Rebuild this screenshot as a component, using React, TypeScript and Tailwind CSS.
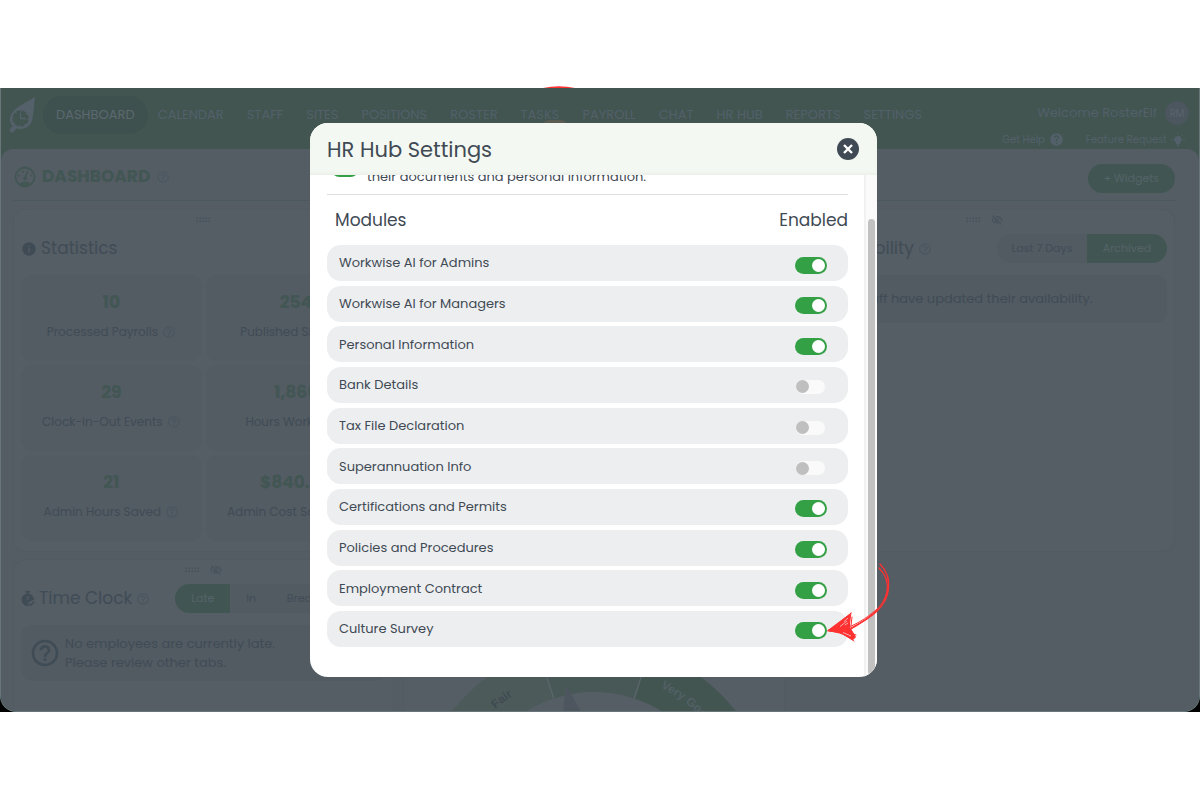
import React from "react";
import { MdHelp, MdHelpOutline, MdInfo, MdOutlineVisibilityOff } from "react-icons/md";

const navItems = [
  "DASHBOARD",
  "CALENDAR",
  "STAFF",
  "SITES",
  "POSITIONS",
  "ROSTER",
  "TASKS",
  "PAYROLL",
  "CHAT",
  "HR HUB",
  "REPORTS",
  "SETTINGS",
];

const stats = [
  { value: "10", label: "Processed Payrolls" },
  { value: "254", label: "Published Shifts" },
  { value: "29", label: "Clock-in-Out Events" },
  { value: "1,866", label: "Hours Worked" },
  { value: "21", label: "Admin Hours Saved" },
  { value: "$840.00", label: "Admin Cost Savings" },
];

const modules = [
  { name: "Workwise AI for Admins", on: true },
  { name: "Workwise AI for Managers", on: true },
  { name: "Personal Information", on: true },
  { name: "Bank Details", on: false },
  { name: "Tax File Declaration", on: false },
  { name: "Superannuation Info", on: false },
  { name: "Certifications and Permits", on: true },
  { name: "Policies and Procedures", on: true },
  { name: "Employment Contract", on: true },
  { name: "Culture Survey", on: true },
];

function Logo() {
  return (
    <svg viewBox="0 0 26 36" className="h-9 w-[26px] shrink-0" aria-hidden="true">
      <path
        d="M26 0 C18 5 9 9 4 14.500 C0 19 0 25 3.500 29 L0 33 L3 36 L7.500 31.500 C13 33 19 31 22 26 C25 20 24.500 9 26 0 Z"
        fill="#55616a"
      />
      <circle cx="11.500" cy="21.500" r="8.300" fill="#425551" />
      <circle cx="11.500" cy="21.500" r="7.600" fill="none" stroke="#55616a" strokeWidth="1.400" strokeDasharray="1.600 4.370" />
      <path d="M11.500 15.500 V21.500 H17" fill="none" stroke="#55616a" strokeWidth="1.300" />
    </svg>
  );
}

function GaugeIcon() {
  return (
    <svg viewBox="0 0 22 22" className="size-[22px]" aria-hidden="true">
      <circle cx="11" cy="11" r="9.500" fill="none" stroke="currentColor" strokeWidth="1.800" />
      <path d="M5 18 Q11 13 17 18 Q11 22.500 5 18 Z" fill="currentColor" />
      <path d="M11 12.500 L13.500 5.500" stroke="currentColor" strokeWidth="1.600" strokeLinecap="round" />
      <circle cx="11" cy="12.500" r="1.700" fill="currentColor" />
      <circle cx="5" cy="9.500" r="1" fill="currentColor" />
      <circle cx="9" cy="5.800" r="1" fill="currentColor" />
      <circle cx="17" cy="9.500" r="1" fill="currentColor" />
    </svg>
  );
}

function StopwatchIcon() {
  return (
    <svg viewBox="0 0 14 16" className="h-4 w-3.5" aria-hidden="true">
      <path d="M4.500 0 H9 V1.600 H4.500 Z M6 1.600 H7.500 V3 H6 Z" fill="currentColor" />
      <path d="M6.800 2.500 A6.300 6.300 0 1 0 8 15 L6.500 12 L10 10 L13 9 A6.300 6.300 0 0 0 6.800 2.500 Z" fill="currentColor" />
      <path d="M6.800 5 V9" stroke="#545c64" strokeWidth="1.300" />
      <path d="M8 12.500 L9.800 14.300 L13.300 10.800" fill="none" stroke="currentColor" strokeWidth="1.500" />
    </svg>
  );
}

function BulbIcon() {
  return (
    <svg viewBox="0 0 14 14" className="size-3.5" aria-hidden="true">
      <path d="M7 3 A3.500 3.500 0 0 0 5 9.500 V11 H9 V9.500 A3.500 3.500 0 0 0 7 3 Z M5.700 11.600 H8.300 V13 H5.700 Z" fill="currentColor" />
      <path
        d="M7 0 V1.500 M0.300 6.500 H2 M12 6.500 H13.700 M2.200 1.800 L3.300 2.900 M11.800 1.800 L10.700 2.900"
        stroke="currentColor"
        strokeWidth="1"
      />
    </svg>
  );
}

function DragDots() {
  return (
    <svg viewBox="0 0 15 6" className="h-1.5 w-[15px]" aria-hidden="true">
      {[0, 1, 2, 3, 4].map((c) =>
        [0, 1].map((r) => <rect key={`${c}-${r}`} x={c * 3 + 0.5} y={r * 3 + 0.5} width="1.500" height="1.500" fill="currentColor" />),
      )}
    </svg>
  );
}

function Card({ hideable, className, children }: { hideable?: boolean; className?: string; children: React.ReactNode }) {
  return (
    <section className={`rounded-xl border border-[#525a62] bg-[#555d65] px-[7px] ${className ?? ""}`}>
      <div className="flex h-6 items-center justify-center gap-2.5 pb-1 text-[#46525a]">
        <DragDots />
        {hideable && <MdOutlineVisibilityOff className="size-3" />}
      </div>
      {children}
    </section>
  );
}

function CardTitle({ icon, help, children }: { icon: React.ReactNode; help?: boolean; children: React.ReactNode }) {
  return (
    <h2 className="flex items-center gap-1 text-[17px] text-[#404c55]">
      {icon}
      {children}
      {help && <MdHelpOutline className="size-3.5 text-[#4a565e]" />}
    </h2>
  );
}

function Dial() {
  return (
    <svg viewBox="0 0 360 180" className="mx-auto h-[180px] w-[360px]" aria-hidden="true">
      <path d="M0 180 A180 180 0 0 1 124.400 8.800 L139.800 56.400 A130 130 0 0 0 50 180 Z" fill="#4d5a5a" />
      <path d="M124.400 8.800 A180 180 0 0 1 235.600 8.800 L220.200 56.400 A130 130 0 0 0 139.800 56.400 Z" fill="#475856" />
      <path d="M235.600 8.800 A180 180 0 0 1 360 180 L310 180 A130 130 0 0 0 220.200 56.400 Z" fill="#425551" />
      <path d="M124.400 8.800 L139.800 56.400 M235.600 8.800 L220.200 56.400" stroke="#5a646a" strokeWidth="1.500" />
      <path d="M152 43 L147 90 L178 90 Z" fill="#4d565f" />
      <path id="dial-arc" d="M30 180 A150 150 0 0 1 330 180" fill="none" />
      <g fill="#3f4b52" fontSize="12" fontWeight="600" fontFamily="Liberation Sans, sans-serif">
        <text textAnchor="middle">
          <textPath href="#dial-arc" startOffset="29.500%">Fair</textPath>
        </text>
        <text fill="#526066" textAnchor="middle">
          <textPath href="#dial-arc" startOffset="71%">Very Good</textPath>
        </text>
      </g>
    </svg>
  );
}

function Arrow() {
  return (
    <svg viewBox="0 0 64 84" className="absolute -right-[14px] bottom-[33px] h-[84px] w-16" aria-hidden="true">
      <g fill="none" stroke="#ff3131" strokeLinecap="round" strokeLinejoin="round">
        <path d="M53 4 C60 11 62.500 19 61.500 29 C60 47 44 58 24 68" strokeWidth="1.200" />
        <path d="M52 8 C59 15 61.500 22 60 31 C57 48 41 59 23 69.500" strokeWidth="1.200" />
        <path d="M61 17 C62 27 61 34 57 41 M50 49 C42 56 34 62 22 67" strokeWidth="1" />
        <path d="M1 70.500 L23 54 L22.500 67 L28.500 77 L25.500 80 L14 73 Z" fill="#ff3131" strokeWidth="1" />
        <path d="M1 70.500 C10 66 17 60 24 53 M2 71 C12 72 20 75 27 81 M24 53 L21 72 L29 75 M25 57 L24 66" strokeWidth="1" />
      </g>
      <path d="M17 61.500 L21 58 M13 66.500 L20 61 M16 72.500 L24 76 M18 65 L21 63" stroke="#f3c9cb" strokeWidth="0.800" />
    </svg>
  );
}

function Backdrop() {
  return (
    <div className="flex h-full flex-col overflow-hidden rounded-b-2xl border-x border-b border-[#68767a] bg-[#425551]">
      <header className="flex h-[61px] shrink-0 items-start justify-between pr-2.5 pl-2 text-[#53606a]">
        <div className="flex items-center pt-2">
          <Logo />
          <nav className="ml-[21px] flex gap-[23px] text-[13px]">
            {navItems.map((item, i) => (
              <a
                key={item}
                href="#"
                className={`relative flex h-[38px] items-center rounded-full ${i === 0 ? "-mx-[13px] bg-[#3f514e] px-[13px] text-[#5b6870]" : ""}`}
              >
                {item}
                {item === "TASKS" && <span className="absolute top-6 -right-2 h-3 w-6 rounded-full bg-[#5a5b51]" />}
              </a>
            ))}
          </nav>
        </div>
        <div className="flex flex-col items-end pt-[13px]">
          <div className="flex items-center gap-2 text-[13px]">
            Welcome RosterElf
            <span className="flex size-6 items-center justify-center rounded-full bg-[#4b565f] text-[10px] text-[#59646c]">RM</span>
          </div>
          <div className="mt-[7px] flex items-center gap-[22px] pr-1 text-[10px]">
            <a href="#" className="flex items-center gap-1">
              Get Help <MdHelp className="size-[15px]" />
            </a>
            <a href="#" className="flex items-center gap-1">
              Feature Request <BulbIcon />
            </a>
          </div>
        </div>
      </header>

      <main className="grow rounded-t-xl bg-[#545c64] pr-6 pl-3">
        <div className="flex h-[52px] items-center justify-between border-b border-[#4b595f] pt-1">
          <h1 className="flex items-center gap-1.5 pl-px text-[17px] font-bold text-[#425653]">
            <GaugeIcon />
            DASHBOARD
            <MdHelpOutline className="size-3.5 text-[#4a5860]" />
          </h1>
          <button className="mt-1 h-[29px] rounded-full bg-[#415652] px-4 text-[11px] text-[#55636a]">+ Widgets</button>
        </div>

        <div className="mt-2 grid grid-cols-3 gap-x-[9px] gap-y-[7px]">
          <Card className="h-[343px]">
            <div className="flex h-[29px] items-center">
              <CardTitle icon={<MdInfo className="size-4" />}>Statistics</CardTitle>
            </div>
            <div className="mt-3 grid grid-cols-2 gap-1">
              {stats.map((s) => (
                <div key={s.label} className="flex h-[86px] flex-col items-center rounded-xl bg-[#535b63] pt-[15px]">
                  <strong className="text-[17px] leading-6 text-[#425653]">{s.value}</strong>
                  <span className="mt-2 flex items-center gap-1 text-xs leading-5 whitespace-nowrap text-[#404c55]">
                    {s.label}
                    <MdHelpOutline className="size-3.5 text-[#4a565e]" />
                  </span>
                </div>
              ))}
            </div>
          </Card>
          <div />
          <Card hideable className="h-[343px]">
            <div className="flex h-[29px] items-center justify-between">
              <CardTitle icon={<MdInfo className="size-4" />} help>
                Availability
              </CardTitle>
              <div className="flex h-full overflow-hidden rounded-full text-[11px]">
                <button className="w-[90px] bg-[#525a62] text-[#414d56]">Last 7 Days</button>
                <button className="w-20 bg-[#415652] text-[#55636a]">Archived</button>
              </div>
            </div>
            <div className="mt-3 flex h-12 items-center gap-1 rounded-xl bg-[#525a62] px-1 text-[13px] text-[#404c55]">
              <MdHelpOutline className="size-7" />
              No staff have updated their availability.
            </div>
          </Card>

          <Card hideable className="h-[200px]">
            <div className="flex h-[29px] items-center gap-[25px]">
              <CardTitle icon={<StopwatchIcon />} help>
                Time Clock
              </CardTitle>
              <div className="flex h-full overflow-hidden rounded-full text-[11px]">
                <button className="w-[55px] bg-[#415652] text-[#55636a]">Late</button>
                <button className="w-[42px] bg-[#525a62] text-[#414d56]">In</button>
                <button className="w-[60px] bg-[#525a62] text-[#414d56]">Break</button>
              </div>
            </div>
            <div className="mt-3 flex h-14 items-center gap-1 rounded-xl bg-[#525a62] px-2 text-[13px] leading-[19px] text-[#404c55]">
              <MdHelpOutline className="size-8" />
              <p>
                No employees are currently late.
                <br />
                Please review other tabs.
              </p>
            </div>
          </Card>
          <Card hideable className="h-[200px]">
            <div className="pt-[58px]">
              <Dial />
            </div>
          </Card>
        </div>
      </main>
    </div>
  );
}

function SettingsDialog() {
  return (
    <div role="dialog" aria-labelledby="dialog-title" className="relative w-[567px]">
      <div className="flex h-[554px] flex-col overflow-hidden rounded-[18px] bg-white text-[#3f4a54]">
        <div className="z-10 flex h-[52px] shrink-0 items-center justify-between bg-[#f4f8f2] pr-[18px] pl-[17px] shadow-[inset_0_-3px_4px_-2px_#e6ece5]">
          <h2 id="dialog-title" className="pt-0.5 text-[21px]">
            HR Hub Settings
          </h2>
          <button aria-label="Close" className="flex size-[22px] items-center justify-center rounded-full bg-[#3f4a54]">
            <svg viewBox="0 0 10 10" className="size-2.5" aria-hidden="true">
              <path d="M1 1 L9 9 M9 1 L1 9" stroke="#fff" strokeWidth="2.400" />
            </svg>
          </button>
        </div>
        <div className="flex min-h-0 grow">
          <div className="flex grow flex-col justify-end overflow-hidden pr-4 pb-[30px] pl-[17px]">
            <div className="flex items-end border-b border-[#dcdee0] pb-[7px] pl-1">
              <span className="mr-2 mb-[10px] h-[17px] w-7 rounded-full bg-[#34a046]" />
              <p className="text-[13px] leading-5">their documents and personal information.</p>
            </div>
            <div className="flex h-[50px] shrink-0 items-center justify-between pt-0.5 pl-2 text-[17px]">
              <h3>Modules</h3>
              <span>Enabled</span>
            </div>
            <ul className="flex h-[402px] shrink-0 flex-col justify-between">
              {modules.map((m) => (
                <li key={m.name}>
                  <label className="flex h-9 items-center justify-between rounded-[14px] bg-[#edeef0] pr-[21px] pl-3 text-[13px]">
                    {m.name}
                    <input
                      type="checkbox"
                      role="switch"
                      defaultChecked={m.on}
                      className="mt-1 mr-0.5 flex h-[14px] w-[29px] appearance-none items-center rounded-full bg-[#fafafa] before:size-[13px] before:rounded-full before:bg-[#bfbfbf] checked:mr-0 checked:h-[17px] checked:w-8 checked:justify-end checked:bg-[#34a046] checked:px-0.5 checked:before:bg-white"
                    />
                  </label>
                </li>
              ))}
            </ul>
          </div>
          <div className="flex w-[13px] shrink-0 justify-center border-l-2 border-[#f1f1f1] bg-[#fafafa] pt-11 pb-0.5">
            <div className="w-[7px] rounded-full bg-[#c1c1c1]" />
          </div>
        </div>
      </div>
      <Arrow />
    </div>
  );
}

export default function App() {
  return (
    <div className="flex min-h-screen flex-col justify-center bg-white font-[Poppins,Inter,sans-serif]">
      <div className="relative h-[624px] w-full bg-black">
        <svg viewBox="0 0 32 2" className="absolute -top-0.5 left-[543px] h-0.5 w-8" aria-hidden="true">
          <path d="M0 2 Q16 -1.500 32 2 Z" fill="#ff3131" />
        </svg>
        <Backdrop />
        <div className="absolute inset-0 flex items-center justify-center pr-[13px]">
          <SettingsDialog />
        </div>
      </div>
    </div>
  );
}
